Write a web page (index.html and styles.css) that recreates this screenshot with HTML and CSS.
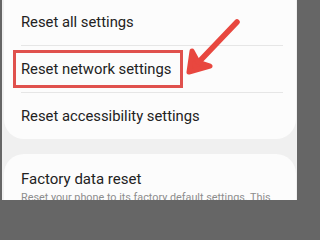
FILE: index.html
```html
<!DOCTYPE html>
<html>
<head>
<meta charset="utf-8">
<link rel="stylesheet" href="styles.css">
</head>
<body>
<div class="screen">
  <div class="card card-top">
    <div class="row">Reset all settings</div>
    <div class="divider"></div>
    <div class="row row-highlight">Reset network settings<span class="highlight"></span></div>
    <div class="divider"></div>
    <div class="row">Reset accessibility settings</div>
  </div>
  <div class="card card-bottom">
    <div class="title">Factory data reset</div>
    <div class="sub">Reset your phone to its factory default settings. This</div>
  </div>
  <svg class="arrow" width="300" height="200" viewBox="0 0 300 200">
    <line x1="239" y1="22" x2="197" y2="66" stroke="#e8473f" stroke-width="5.5" stroke-linecap="round"/>
    <polygon points="194,51 191,72 212,66 200,62" fill="#e8473f" stroke="#e8473f" stroke-width="5" stroke-linejoin="round"/>
  </svg>
</div>
</body>
</html>
```
FILE: styles.css
```css
html, body {
  margin: 0;
  padding: 0;
}
body {
  width: 300px;
  height: 200px;
  overflow: hidden;
  background: #666666;
  font-family: Roboto, "Liberation Sans", sans-serif;
}
.screen {
  position: relative;
  margin: 0 3px 0 2px;
  height: 200px;
  background: #f0f0f0;
  padding: 0 1px 0 2px;
  overflow: hidden;
  display: flex;
  flex-direction: column;
  gap: 15px;
}
.card {
  background: #fcfcfc;
  flex-shrink: 0;
}
.card-top {
  margin-top: -1px;
  border-radius: 0 0 20px 20px;
}
.card-bottom {
  border-radius: 20px 20px 0 0;
  padding: 15px 17px 0 17px;
  height: 60px;
}
.row {
  position: relative;
  height: 46px;
  display: flex;
  align-items: center;
  padding-left: 17px;
  font-size: 14.8px;
  color: #222222;
}
.divider {
  height: 1px;
  background: #e6e6e6;
  margin: 0 13px 0 17px;
}
.highlight {
  position: absolute;
  left: 9px;
  top: 4px;
  width: 170px;
  height: 38px;
  box-sizing: border-box;
  border: 3px solid #e0514d;
}
.title {
  font-size: 15px;
  color: #222222;
  line-height: 20px;
}
.sub {
  font-size: 10.8px;
  color: #8d8d8d;
  margin-top: 2px;
  white-space: nowrap;
}
.arrow {
  position: absolute;
  left: -4px;
  top: 0;
  pointer-events: none;
}
```
